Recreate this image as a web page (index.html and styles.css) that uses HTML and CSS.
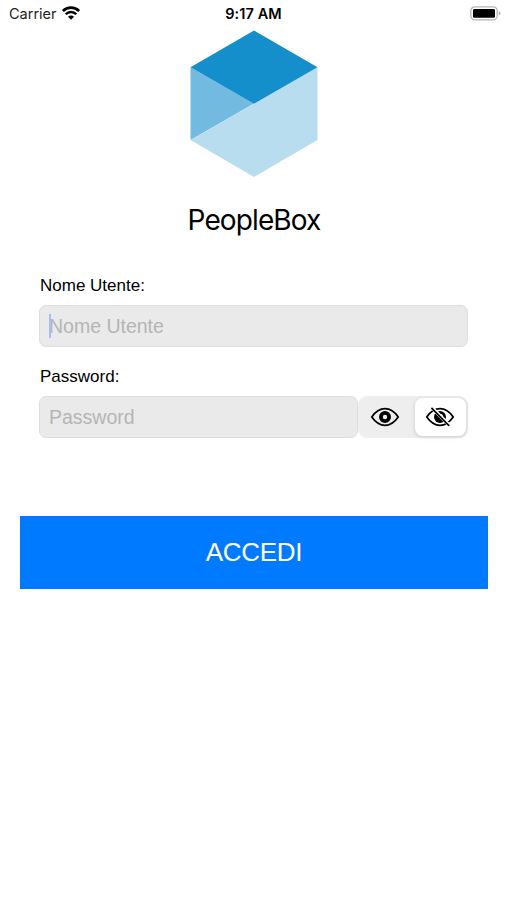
FILE: index.html
```html
<!DOCTYPE html>
<html lang="it">
<head>
    <meta charset="UTF-8">
    <meta name="viewport" content="width=device-width, initial-scale=1.0">
    <title>PeopleBox</title>
    <link rel="stylesheet" href="styles.css">
</head>
<body>
    <header class="status-bar">
        <div class="carrier">
            <span>Carrier</span>
            <svg width="18" height="14" viewBox="0 0 18 14">
                <path d="M0.9 5.1 A11.4 11.4 0 0 1 17.1 5.1" fill="none" stroke="#000" stroke-width="2.8"/>
                <path d="M3.7 8.3 A7.2 7.2 0 0 1 14.3 8.3" fill="none" stroke="#000" stroke-width="2.4"/>
                <path d="M6 10.8 A4.1 4.1 0 0 1 12 10.8 L9 13.8 Z" fill="#000"/>
            </svg>
        </div>
        <div class="clock">9:17 AM</div>
        <div class="battery">
            <svg width="31" height="15" viewBox="0 0 31 15">
                <rect x="0.8" y="0.8" width="26.4" height="13" rx="4" fill="#fff" stroke="#b4b4b4" stroke-width="1.3"/>
                <rect x="3" y="3" width="22" height="8.8" rx="1.4" fill="#000"/>
                <path d="M28.7 5 Q30.6 5.8 30.6 7.3 Q30.6 8.8 28.7 9.6 Z" fill="#b4b4b4"/>
            </svg>
        </div>
    </header>

    <main class="login">
        <svg class="logo" width="128" height="148" viewBox="0 0 128 148">
            <polygon points="0.5,37.3 64,73.5 0.5,110" fill="#72badf"/>
            <polygon points="127.5,37.3 127.5,110 64,147 0.5,110" fill="#b8ddef"/>
            <polygon points="64,0.5 127.5,37.3 64,73.7 0.5,37.3" fill="#148fcc"/>
        </svg>
        <h1>PeopleBox</h1>

        <form id="loginForm">
            <label for="username">Nome Utente:</label>
            <div class="field">
                <input type="text" id="username" name="username" placeholder="Nome Utente">
                <span class="caret"></span>
            </div>

            <label for="password">Password:</label>
            <div class="password-row">
                <input type="password" id="password" name="password" placeholder="Password">
                <div class="toggle">
                    <button type="button" aria-label="Mostra password">
                        <svg width="30" height="22" viewBox="0 0 30 22">
                            <path d="M1.8 11 Q7.5 2.7 15 2.7 T28.2 11 Q22.5 19.3 15 19.3 T1.8 11 Z" fill="none" stroke="#000" stroke-width="1.7"/>
                            <circle cx="15" cy="11" r="4.1" fill="none" stroke="#000" stroke-width="3.8"/>
                        </svg>
                    </button>
                    <button type="button" class="active" aria-label="Nascondi password">
                        <svg width="30" height="22" viewBox="0 0 30 22">
                            <path d="M1.8 11 Q7.5 2.7 15 2.7 T28.2 11 Q22.5 19.3 15 19.3 T1.8 11 Z" fill="none" stroke="#000" stroke-width="1.7"/>
                            <circle cx="15" cy="11" r="6" fill="#000"/>
                            <path d="M15.5 8.6 A2.4 2.4 0 0 1 17.6 11" fill="none" stroke="#fff" stroke-width="1.1"/>
                            <path d="M7 1.8 L24.6 19.4" stroke="#fff" stroke-width="3.6"/>
                            <path d="M6.4 1.8 L24.2 19.8" stroke="#000" stroke-width="1.7"/>
                        </svg>
                    </button>
                </div>
            </div>

            <button type="submit" class="submit">ACCEDI</button>
        </form>
    </main>
</body>
</html>
```
FILE: styles.css
```css
* {
    box-sizing: border-box;
}

body {
    margin: 0;
    background: #fff;
    color: #000;
    font-family: "Liberation Sans", Arial, sans-serif;
}

.status-bar {
    display: grid;
    grid-template-columns: 1fr auto 1fr;
    align-items: center;
    height: 28px;
    padding: 0 6px 2px;
    font-family: Inter, sans-serif;
    font-size: 14.5px;
}

.carrier {
    display: flex;
    align-items: center;
    gap: 5px;
    padding-left: 3px;
    color: #222;
}

.carrier svg {
    margin-top: -1px;
}

.clock {
    font-weight: 600;
    letter-spacing: 0.1px;
}

.battery {
    display: flex;
    justify-content: flex-end;
}

.login {
    padding: 2px 19px 0 20px;
}

.logo {
    display: block;
    margin: 0 auto;
}

h1 {
    margin: 22px 0 0;
    font-family: Inter, sans-serif;
    font-size: 28px;
    font-weight: 400;
    letter-spacing: -0.9px;
    line-height: 40px;
    text-align: center;
}

form {
    margin-top: 35px;
}

label {
    display: block;
    margin: 0 20px;
    font-size: 17px;
    line-height: 22px;
}

.field,
.password-row {
    display: flex;
    position: relative;
    height: 42px;
    margin: 8px 20px 19px 19px;
}

input {
    flex: 1;
    min-width: 0;
    padding: 0 9px;
    border: 1px solid #dedede;
    border-radius: 7px;
    background: #eaeaea;
    font-family: inherit;
    font-size: 19.5px;
    outline: none;
}

input::placeholder {
    color: #b5b5b5;
}

/* cursore di testo */
.caret {
    position: absolute;
    left: 10px;
    top: 9px;
    width: 2px;
    height: 24px;
    background: #a9bdf0;
}

.toggle {
    display: flex;
    width: 110px;
    padding: 2px;
    border-radius: 9px;
    background: #eeeeef;
}

.toggle button {
    display: flex;
    flex: 1;
    align-items: center;
    justify-content: center;
    padding: 0 6px 0 0;
    border: none;
    border-radius: 8px;
    background: none;
}

.toggle .active {
    flex: 0 0 51px;
    padding-right: 2px;
    background: #fff;
    box-shadow: 0 1px 4px rgba(0, 0, 0, 0.15);
}

.submit {
    display: block;
    width: 100%;
    height: 73px;
    margin-top: 78px;
    border: none;
    background: #007aff;
    color: #fff;
    font-family: inherit;
    font-size: 26px;
    letter-spacing: -0.3px;
}
```
